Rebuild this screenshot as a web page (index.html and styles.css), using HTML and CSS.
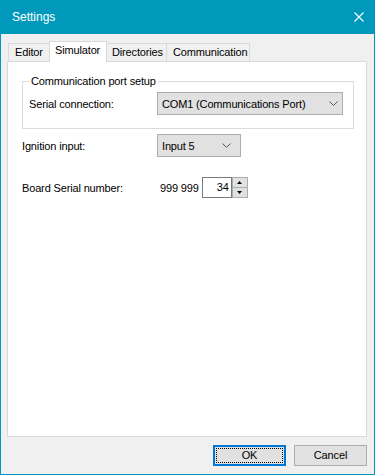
FILE: index.html
```html
<!DOCTYPE html>
<html>
<head>
<meta charset="utf-8">
<link rel="stylesheet" href="styles.css">
</head>
<body>
<div class="window">
  <div class="titlebar">
    <span class="title">Settings</span>
    <svg class="close" width="10" height="10" viewBox="0 0 10 10"><path d="M0.5 0.5 L9.5 9.5 M9.5 0.5 L0.5 9.5" stroke="#fff" stroke-width="1.1" fill="none"/></svg>
  </div>
  <div class="tabstrip">
    <div class="tab t-editor">Editor</div>
    <div class="tab t-sim selected">Simulator</div>
    <div class="tab t-dir">Directories</div>
    <div class="tab t-comm">Communication</div>
  </div>
  <div class="panel">
    <fieldset class="group">
      <legend>Communication port setup</legend>
      <div class="row">
        <span class="label label-in">Serial connection:</span>
        <div class="combo combo-wide"><span>COM1 (Communications Port)</span>
          <svg class="chev" width="9" height="5" viewBox="0 0 9 5"><path d="M0.5 0.5 L4.5 4.5 L8.5 0.5" stroke="#555" stroke-width="1" fill="none"/></svg>
        </div>
      </div>
    </fieldset>
    <div class="row row-ign">
      <span class="label">Ignition input:</span>
      <div class="combo combo-small"><span>Input 5</span>
        <svg class="chev" width="9" height="5" viewBox="0 0 9 5"><path d="M0.5 0.5 L4.5 4.5 L8.5 0.5" stroke="#555" stroke-width="1" fill="none"/></svg>
      </div>
    </div>
    <div class="row row-serial">
      <span class="label">Board Serial number:</span>
      <span class="prefix">999 999</span>
      <div class="spinbox">34</div>
      <div class="spinbtns">
        <div class="sbtn"><svg width="5" height="3" viewBox="0 0 5 3"><path d="M0 3 L2.5 0 L5 3 Z" fill="#000"/></svg></div>
        <div class="sbtn"><svg width="5" height="3" viewBox="0 0 5 3"><path d="M0 0 L2.5 3 L5 0 Z" fill="#000"/></svg></div>
      </div>
    </div>
  </div>
  <div class="buttons">
    <div class="btn btn-default">OK</div>
    <div class="btn">Cancel</div>
  </div>
</div>
</body>
</html>
```
FILE: styles.css
```css
* { box-sizing: border-box; }
html, body { margin: 0; padding: 0; }
body {
  font-family: "Liberation Sans", Arial, sans-serif;
  font-size: 11px;
  letter-spacing: -0.15px;
  color: #000;
  background: #f0f0f0;
}
.window {
  width: 375px;
  height: 475px;
  border: 1px solid #0099bc;
  border-top: none;
  background: #f0f0f0;
  display: flex;
  flex-direction: column;
}
.titlebar {
  height: 34px;
  background: #0099bc;
  display: flex;
  align-items: center;
  justify-content: space-between;
  padding: 0 10px 1px 11px;
}
.title {
  color: #fff;
  font-size: 12px;
  line-height: 14px;
  letter-spacing: 0;
}
.close { display: block; margin-top: 1px; }
.tabstrip {
  margin-top: 7px;
  margin-left: 7px;
  height: 20px;
  display: flex;
  align-items: flex-end;
}
.tab {
  height: 18px;
  border: 1px solid #d9d9d9;
  border-bottom: none;
  background: #f0f0f0;
  line-height: 16px;
  padding-left: 6px;
  white-space: nowrap;
}
.t-editor { width: 43px; }
.t-sim { width: 58px; }
.t-dir { width: 62px; }
.t-comm { width: 84px; margin-left: -1px; padding-left: 6px; }
.tab.selected {
  position: relative;
  z-index: 2;
  height: 21px;
  margin: 0 -2px -1px -2px;
  background: #fff;
  line-height: 17px;
  padding-left: 5px;
}
.panel {
  margin-left: 6px;
  width: 360px;
  height: 376px;
  background: #fff;
  border: 1px solid #d9d9d9;
  padding: 13px 12px 0 14px;
}
.group {
  margin: 0;
  width: 332px;
  border: 1px solid #dcdcdc;
  padding: 4px 10px 13px 6px;
  min-width: 0;
}
.group legend {
  padding: 0 2px;
  margin-left: 0;
  line-height: 13px;
}
.row {
  display: flex;
  align-items: center;
}
.label { width: 135px; flex: none; }
.label-in { width: 128px; }
.combo {
  height: 23px;
  background: #e1e1e1;
  border: 1px solid #adadad;
  display: flex;
  align-items: center;
  justify-content: space-between;
  padding: 0 4px 0 4px;
}
.combo-wide { width: 186px; }
.combo-small { width: 84px; padding-right: 9px; }
.chev { display: block; }
.row-ign { margin-top: 5px; }
.row-serial { margin-top: 20px; }
.prefix { margin-left: 3px; }
.spinbox {
  margin-left: 3px;
  width: 30px;
  height: 21px;
  border: 1px solid #7a7a7a;
  background: #fff;
  text-align: right;
  line-height: 19px;
  padding-right: 2px;
}
.spinbtns {
  width: 16px;
  height: 21px;
  display: flex;
  flex-direction: column;
  margin-left: 0;
}
.sbtn {
  flex: 1;
  background: #e1e1e1;
  border: 1px solid #adadad;
  display: flex;
  align-items: center;
  justify-content: center;
}
.sbtn + .sbtn { border-top: none; }
.sbtn svg { display: block; }
.buttons {
  margin-top: 8px;
  display: flex;
  justify-content: flex-end;
  gap: 8px;
  padding-right: 7px;
}
.btn {
  width: 73px;
  height: 21px;
  background: #e1e1e1;
  border: 1px solid #adadad;
  text-align: center;
  line-height: 19px;
}
.btn-default {
  border: 2px solid #0078d7;
  line-height: 17px;
  outline: 1px dotted #000;
  outline-offset: -4px;
}
```
